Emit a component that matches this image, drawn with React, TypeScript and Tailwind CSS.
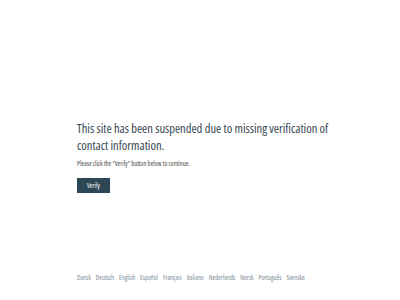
export default function App() {
  const langs = ["Dansk", "Deutsch", "English", "Español", "Français", "Italiano", "Nederlands", "Norsk", "Português", "Svenska"];
  return (
    <div className="w-[400px] h-[300px] bg-white flex flex-col" style={{ fontFamily: '"Open Sans", sans-serif' }}>
      <div className="flex-1 flex flex-col pl-[77px] pr-[60px] pt-[120px]">
        <h1 className="text-[12.5px] leading-[17px] text-[#35454f] font-normal [font-stretch:79%]">
          This site has been suspended due to missing verification of contact information.
        </h1>
        <p className="mt-[6px] text-[6.6px] leading-[8px] text-[#4a4a4a] [font-stretch:78%]">
          Please click the “Verify” button below to continue.
        </p>
        <div className="mt-[10px] flex">
          <button className="w-[33px] h-[15px] flex items-center justify-center bg-[#2e4756] text-white text-[6.6px] leading-[8px] [font-stretch:78%]">Verify</button>
        </div>
      </div>
      <div className="pl-[77px] pb-[18px] flex gap-[5px] text-[6.6px] leading-[8px] text-[#7a8a94] [font-stretch:78%]">
        {langs.map((l) => (
          <span key={l}>{l}</span>
        ))}
      </div>
    </div>
  );
}
